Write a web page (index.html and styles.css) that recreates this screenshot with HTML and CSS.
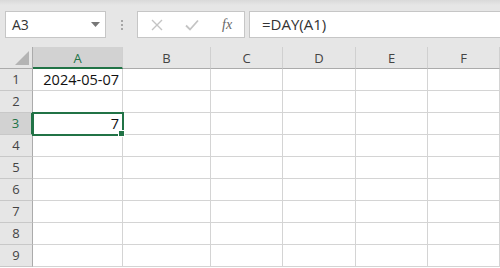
FILE: index.html
```html
<!DOCTYPE html>
<html lang="en">
<head>
  <meta charset="UTF-8">
  <meta name="viewport" content="width=device-width, initial-scale=1.0">
  <title>DAY function</title>
  <link rel="stylesheet" href="styles.css">
</head>
<body>
  <!-- Formula bar -->
  <div class="toolbar">
    <div class="name-box">
      <span>A3</span>
      <svg class="caret" width="9" height="5" viewBox="0 0 9 5"><path d="M0 0H9L4.5 5Z" fill="#777"/></svg>
    </div>
    <div class="grip"><i></i><i></i><i></i></div>
    <div class="fx-buttons">
      <svg width="12" height="12" viewBox="0 0 12 12"><path d="M1 1L11 11M11 1L1 11" stroke="#c4c4c4" stroke-width="1.4"/></svg>
      <svg width="14" height="12" viewBox="0 0 14 12"><path d="M1 6.5L5 10.5L13 1.5" stroke="#c4c4c4" stroke-width="1.8" fill="none"/></svg>
      <span class="fx">fx</span>
    </div>
    <div class="formula">=DAY(A1)</div>
  </div>

  <!-- Grid -->
  <div class="sheet">
    <div class="corner"><span class="tri"></span></div>
    <div class="col-head active">A</div>
    <div class="col-head">B</div>
    <div class="col-head">C</div>
    <div class="col-head">D</div>
    <div class="col-head">E</div>
    <div class="col-head">F</div>
  </div>
  <div id="rows" class="sheet"></div>

  <script>
    const data = { 1: "2024-05-07", 3: "7" };
    const rows = document.getElementById("rows");
    for (let r = 1; r <= 9; r++) {
      let html = `<div class="row-head${r === 3 ? " active" : ""}">${r}</div>`;
      html += `<div class="cell${r === 3 ? " selected" : ""}">${data[r] || ""}</div>`;
      for (let c = 0; c < 5; c++) html += `<div class="cell"></div>`;
      rows.insertAdjacentHTML("beforeend", html);
    }
  </script>
</body>
</html>
```

FILE: styles.css
```css
body {
  margin: 0;
  width: 500px;
  height: 268px;
  overflow: hidden;
  background: #fff;
  font-family: "Open Sans", "Noto Sans", sans-serif;
  color: #222;
}

.toolbar {
  height: 47px;
  box-sizing: border-box;
  padding-top: 11px;
  display: flex;
  align-items: flex-start;
  background: linear-gradient(#d9d9d9 0, #e6e6e6 5px, #e6e6e6 100%);
}

.name-box {
  margin-left: 5px;
  width: 101px;
  height: 27px;
  box-sizing: border-box;
  border: 1px solid #c6c6c6;
  background: #fff;
  display: flex;
  align-items: center;
  justify-content: space-between;
  padding: 0 5px 0 6px;
  font-size: 14px;
  color: #333;
}

.grip {
  width: 31px;
  height: 27px;
  display: flex;
  flex-direction: column;
  align-items: center;
  justify-content: center;
  gap: 2px;
}

.grip i {
  width: 2px;
  height: 2px;
  background: #a6a6a6;
}

.fx-buttons {
  width: 108px;
  height: 27px;
  box-sizing: border-box;
  border: 1px solid #c6c6c6;
  background: #fff;
  display: flex;
  align-items: center;
  padding-left: 13px;
  gap: 22px;
}

.fx {
  font-family: "Liberation Serif", serif;
  font-style: italic;
  font-size: 14px;
  color: #666;
  margin-left: 1px;
}

.formula {
  margin-left: 4px;
  flex: 1;
  height: 27px;
  box-sizing: border-box;
  border: 1px solid #c6c6c6;
  border-right: none;
  background: #fff;
  padding-left: 12px;
  line-height: 25px;
  font-size: 15px;
  color: #333;
}

.sheet {
  display: grid;
  grid-template-columns: 33px 90px 88px 72px 73px 72px 72px;
  grid-auto-rows: 22px;
}

.sheet:first-of-type {
  grid-auto-rows: 24px;
}

.corner {
  background: #e6e6e6;
  border-right: 1px solid #ababab;
  border-bottom: 1px solid #ababab;
  position: relative;
}

.tri {
  position: absolute;
  right: 3px;
  bottom: 3px;
  width: 0;
  height: 0;
  border-left: 14px solid transparent;
  border-bottom: 14px solid #b4b4b4;
}

.col-head {
  background: #e6e6e6;
  border-right: 1px solid #d0d0d0;
  border-bottom: 1px solid #ababab;
  text-align: center;
  font-size: 13px;
  line-height: 23px;
  color: #444;
}

.col-head.active {
  background: #d2d2d2;
  color: #217346;
  border-bottom: 2px solid #217346;
  line-height: 22px;
}

.row-head {
  background: #e6e6e6;
  border-right: 1px solid #ababab;
  border-bottom: 1px solid #c8c8c8;
  text-align: center;
  font-size: 13px;
  line-height: 21px;
  color: #444;
}

.row-head.active {
  background: #d2d2d2;
  color: #217346;
  border-right: 2px solid #217346;
}

.cell {
  border-right: 1px solid #d4d4d4;
  border-bottom: 1px solid #d4d4d4;
  font-size: 14.5px;
  line-height: 21px;
  text-align: right;
  padding-right: 3px;
  color: #111;
}

.cell.selected {
  position: relative;
  outline: 2px solid #217346;
  outline-offset: -1px;
}

.cell.selected::after {
  content: "";
  position: absolute;
  right: -3px;
  bottom: -3px;
  width: 5px;
  height: 5px;
  background: #217346;
  border: 1px solid #fff;
}
```
